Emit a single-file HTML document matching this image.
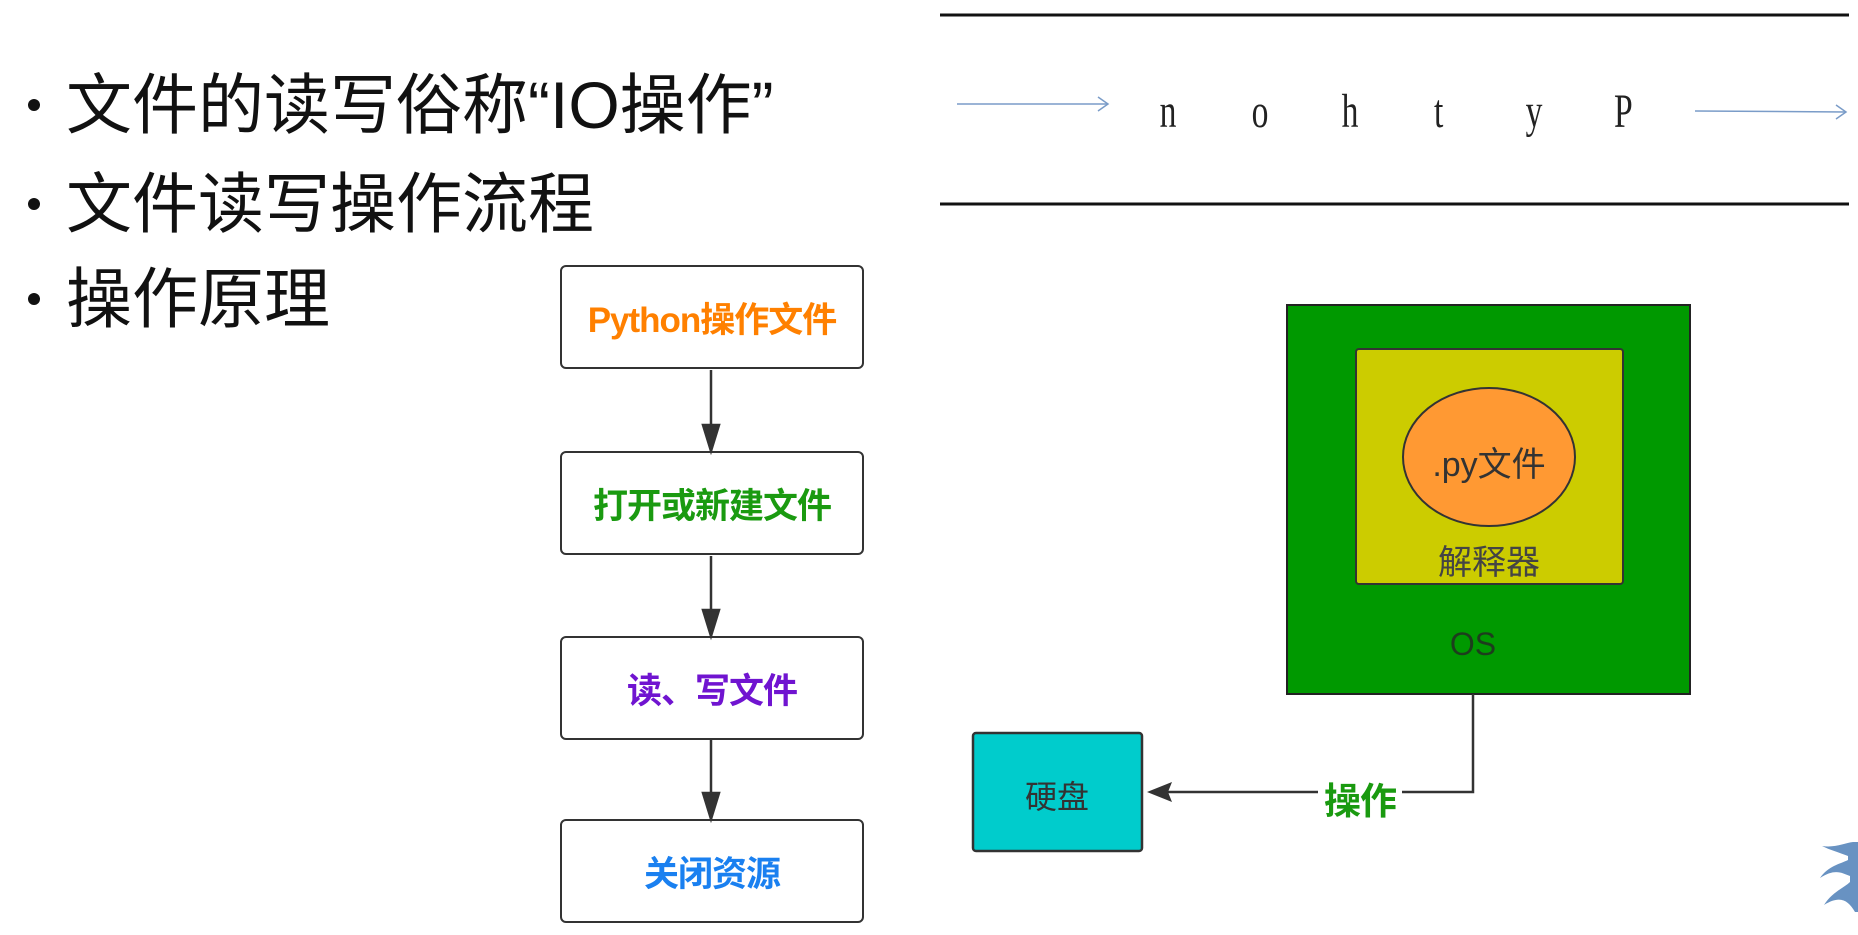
<!DOCTYPE html>
<html><head><meta charset="utf-8"><style>
html,body{margin:0;padding:0;background:#fff;width:1858px;height:935px;overflow:hidden;position:relative}
.t{position:absolute;font-family:"Liberation Sans","Noto Sans CJK SC",sans-serif;white-space:nowrap}
.b{position:absolute;left:28px;width:12px;height:12px;border-radius:50%;background:#111}
.box{position:absolute;left:560px;width:300px;height:100px;border:2.5px solid #333;border-radius:6px;background:#fff;display:flex;align-items:center;justify-content:center;font-family:"Liberation Sans","Noto Sans CJK SC",sans-serif;font-weight:bold;font-size:35px;letter-spacing:-1px}
.l{font-family:"Liberation Serif","DejaVu Serif",serif;font-size:48px;color:#222;top:84px;transform:scaleX(0.7)}
</style></head><body>
<div class="b" style="top:99px"></div>
<div class="b" style="top:198px"></div>
<div class="b" style="top:293px"></div>
<div class="t" style="left:66px;top:68px;font-size:66px;color:#111;line-height:74px">文件的读写俗称“IO操作”</div>
<div class="t" style="left:66px;top:167px;font-size:66px;color:#111;line-height:74px">文件读写操作流程</div>
<div class="t" style="left:66px;top:262px;font-size:66px;color:#111;line-height:74px">操作原理</div>

<div class="box" style="top:265px;color:#ff8000">Python操作文件</div>
<div class="box" style="top:451px;color:#1a9a10">打开或新建文件</div>
<div class="box" style="top:636px;color:#7014d0">读、写文件</div>
<div class="box" style="top:819px;color:#1a80f0">关闭资源</div>

<svg width="1858" height="935" style="position:absolute;left:0;top:0" xmlns="http://www.w3.org/2000/svg">
<g stroke="#333" stroke-width="2.5" fill="#333">
<line x1="711" y1="370" x2="711" y2="428"/><polygon points="703,425 719,425 711,451"/>
<line x1="711" y1="556" x2="711" y2="613"/><polygon points="703,610 719,610 711,636"/>
<line x1="711" y1="740" x2="711" y2="796"/><polygon points="703,793 719,793 711,819"/>
</g>
<line x1="940" y1="15" x2="1849" y2="15" stroke="#111" stroke-width="3"/>
<line x1="940" y1="204" x2="1849" y2="204" stroke="#111" stroke-width="3"/>
<g stroke="#7a9cc8" stroke-width="1.5" fill="none">
<line x1="957" y1="104" x2="1108" y2="104"/><polyline points="1098,97 1108,104 1098,111"/>
<line x1="1695" y1="111" x2="1846" y2="112"/><polyline points="1836,105 1846,112 1836,119"/>
</g>
<rect x="1287" y="305" width="403" height="389" fill="#009900" stroke="#222" stroke-width="2"/>
<rect x="1356" y="349" width="267" height="235" rx="3" fill="#cccc00" stroke="#333" stroke-width="2"/>
<ellipse cx="1489" cy="457" rx="86" ry="69" fill="#ff9933" stroke="#333" stroke-width="2"/>
<rect x="973" y="733" width="169" height="118" rx="3" fill="#00cccc" stroke="#333" stroke-width="2.5"/>
<polyline points="1473,694 1473,792 1160,792" fill="none" stroke="#333" stroke-width="2.5"/>
<polygon points="1147,792 1172,782 1168,792 1172,802" fill="#333"/>
<rect x="1318" y="772" width="84" height="42" fill="#fff"/>
<path d="M1822,846 C1835,848 1845,843 1853,842 L1858,842 L1858,912 L1855,912 C1848,900 1840,895 1824,905 C1832,892 1844,888 1850,882 L1850,876 C1842,873 1835,868 1820,878 C1828,866 1840,864 1848,860 L1848,856 C1838,852 1830,850 1822,846 Z" fill="#6892c2"/>
</svg>

<div class="t l" style="left:1156px">n</div>
<div class="t l" style="left:1248px">o</div>
<div class="t l" style="left:1338px">h</div>
<div class="t l" style="left:1432px">t</div>
<div class="t l" style="left:1522px">y</div>
<div class="t l" style="left:1610px">P</div>

<div class="t" style="left:1489px;top:437px;font-size:34px;color:#333;transform:translateX(-50%)">.py文件</div>
<div class="t" style="left:1489px;top:535px;font-size:34px;color:#444;transform:translateX(-50%)">解释器</div>
<div class="t" style="left:1473px;top:626px;font-size:32px;color:#1d3d1d;transform:translateX(-50%)">OS</div>
<div class="t" style="left:1057px;top:772px;font-size:32px;color:#333;transform:translateX(-50%)">硬盘</div>
<div class="t" style="left:1360px;top:771px;font-size:37px;font-weight:bold;color:#1a9a10;transform:translateX(-50%);letter-spacing:-1px">操作</div>
</body></html>
